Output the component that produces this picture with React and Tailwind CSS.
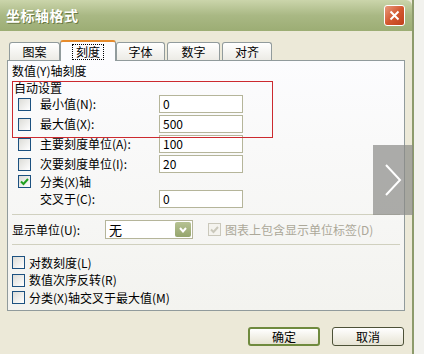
import React from "react";

const font = { fontFamily: '"Noto Sans CJK SC", "Liberation Sans", sans-serif' };

function Check({ checked, disabled }) {
  return (
    <span
      className={
        "flex w-[13px] h-[13px] items-center justify-center border " +
        (disabled
          ? "border-[#cac8bb] bg-[#f4f3ee]"
          : "border-[#1c5180] bg-gradient-to-br from-[#dcdcd7] to-white")
      }
    >
      {checked && (
        <svg width="9" height="9" viewBox="0 0 9 9">
          <path
            d="M1 4.5 L3.5 7 L8 2"
            fill="none"
            stroke={disabled ? "#cac8bb" : "#21a121"}
            strokeWidth="2"
          />
        </svg>
      )}
    </span>
  );
}

function Field({ value }) {
  return (
    <div className="flex items-center w-[84px] h-[18px] border border-[#b5b59a] bg-white pl-[3px] text-[12px] text-black leading-none">
      {value}
    </div>
  );
}

function ValueRow({ label, value, checkbox = true, h = "h-[20px]" }) {
  return (
    <div className={"flex items-center pl-[6px] " + h}>
      <div className="w-[22px]">{checkbox && <Check />}</div>
      <div className="w-[119px] text-[12px] text-black">{label}</div>
      <Field value={value} />
    </div>
  );
}

function Tab({ label, active, w }) {
  if (active) {
    return (
      <div
        className={
          "relative -mx-[2px] z-10 flex h-[21px] -mb-[1px] items-center justify-center rounded-t-[3px] border border-b-0 border-[#919b9c] border-t-[#e68b2c] border-t-2 bg-[#fcfcfe] " +
          w
        }
      >
        <span className="px-[3px] border border-dotted border-black text-[12px] leading-[14px]">
          {label}
        </span>
      </div>
    );
  }
  return (
    <div
      className={
        "flex h-[18px] items-center justify-center rounded-t-[3px] border border-b-0 border-[#919b9c] bg-gradient-to-b from-white to-[#ecebe5] text-[12px] " +
        w
      }
    >
      {label}
    </div>
  );
}

export default function App() {
  return (
    <div className="w-[424px] h-[354px] bg-[#f2f2ee] overflow-hidden" style={font}>
      <div className="relative w-[414px] h-[354px] bg-[#ece9d8] border-r-[2px] border-[#8d9b6c] flex flex-col">
        {/* title bar */}
        <div className="flex h-[31px] items-center justify-between rounded-tr-[6px] bg-gradient-to-b from-[#cbd5ab] via-[#a9b884] to-[#9cad74] px-[6px]">
          <span className="text-[14px] font-bold text-white tracking-[0.5px] [text-shadow:1px_1px_0_#6b7a45]">
            坐标轴格式
          </span>
          <div className="mr-[1px] flex w-[21px] h-[21px] items-center justify-center rounded-[3px] border border-white bg-gradient-to-br from-[#e79a7c] via-[#d3582f] to-[#c0401c]">
            <svg width="11" height="11" viewBox="0 0 11 11">
              <path d="M1.5 1.5 L9.5 9.5 M9.5 1.5 L1.5 9.5" stroke="white" strokeWidth="2" />
            </svg>
          </div>
        </div>

        <div className="flex flex-col px-[7px] pt-[9px]">
          {/* tabs */}
          <div className="flex items-end h-[20px] pl-[2px] gap-[2px]">
            <Tab label="图案" w="w-[51px]" />
            <Tab label="刻度" active w="w-[56px]" />
            <Tab label="字体" w="w-[49px]" />
            <Tab label="数字" w="w-[53px]" />
            <Tab label="对齐" w="w-[50px]" />
          </div>

          {/* panel */}
          <div className="relative flex flex-col h-[251px] border border-[#919b9c] bg-gradient-to-b from-[#fcfcfe] to-[#f3f3ef] pl-[4px]">
            <div className="flex items-center h-[20px] text-[12px]">数值(Y)轴刻度</div>
            <div className="flex items-center h-[13px] pl-[2px] text-[12px]">自动设置</div>
            <ValueRow label="最小值(N):" value="0" />
            <ValueRow label="最大值(X):" value="500" />
            <ValueRow label="主要刻度单位(A):" value="100" />
            <ValueRow label="次要刻度单位(I):" value="20" />
            <div className="flex items-center h-[15px] pl-[6px]">
              <div className="w-[22px]">
                <Check checked />
              </div>
              <span className="text-[12px]">分类(X)轴</span>
            </div>
            <ValueRow label="交叉于(C):" value="0" checkbox={false} />

            <div className="mt-[5px] mr-[4px] border-t border-[#d0d0bf]" />

            <div className="flex items-center h-[29px]">
              <span className="w-[93px] text-[12px]">显示单位(U):</span>
              <div className="flex items-center justify-between w-[88px] h-[19px] border border-[#b5b59a] bg-white pl-[3px] pr-[1px]">
                <span className="text-[13px]">无</span>
                <div className="flex w-[16px] h-[15px] items-center justify-center rounded-[2px] bg-gradient-to-b from-[#b6c293] to-[#95a56c]">
                  <svg width="8" height="6" viewBox="0 0 8 6">
                    <path d="M1 1 L4 4.5 L7 1" fill="none" stroke="white" strokeWidth="2" />
                  </svg>
                </div>
              </div>
              <div className="ml-[15px] flex items-center gap-[4px]">
                <Check checked disabled />
                <span className="text-[12px] text-[#aca899]">图表上包含显示单位标签(D)</span>
              </div>
            </div>

            <div className="mr-[4px] border-t border-[#d0d0bf]" />

            <div className="flex flex-col pt-[9px]">
              {["对数刻度(L)", "数值次序反转(R)", "分类(X)轴交叉于最大值(M)"].map((t) => (
                <div key={t} className="flex items-center h-[17.5px] gap-[4px]">
                  <Check />
                  <span className="text-[12px]">{t}</span>
                </div>
              ))}
            </div>

            {/* annotation box */}
            <div className="absolute left-[4px] top-[20px] w-[261px] h-[57px] border border-[#cc2a2f]" />
          </div>

          {/* buttons */}
          <div className="flex justify-end gap-[12px] mt-[16px] pr-[1px]">
            <button className="w-[72px] h-[19px] rounded-[3px] border-2 border-[#6f8a3e] bg-gradient-to-b from-white to-[#e6e3d3] text-[12px] leading-none">
              确定
            </button>
            <button className="w-[72px] h-[19px] rounded-[3px] border border-[#4d5238] bg-gradient-to-b from-white to-[#e6e3d3] text-[12px] leading-none">
              取消
            </button>
          </div>
        </div>

        {/* carousel arrow overlay */}
        <div className="absolute left-[373px] top-[145px] flex w-[40px] h-[70px] items-center justify-center bg-[#8a8a88]/70">
          <svg width="18" height="34" viewBox="0 0 18 34">
            <path d="M2 2 L16 17 L2 32" fill="none" stroke="white" strokeWidth="2" />
          </svg>
        </div>
      </div>
    </div>
  );
}
